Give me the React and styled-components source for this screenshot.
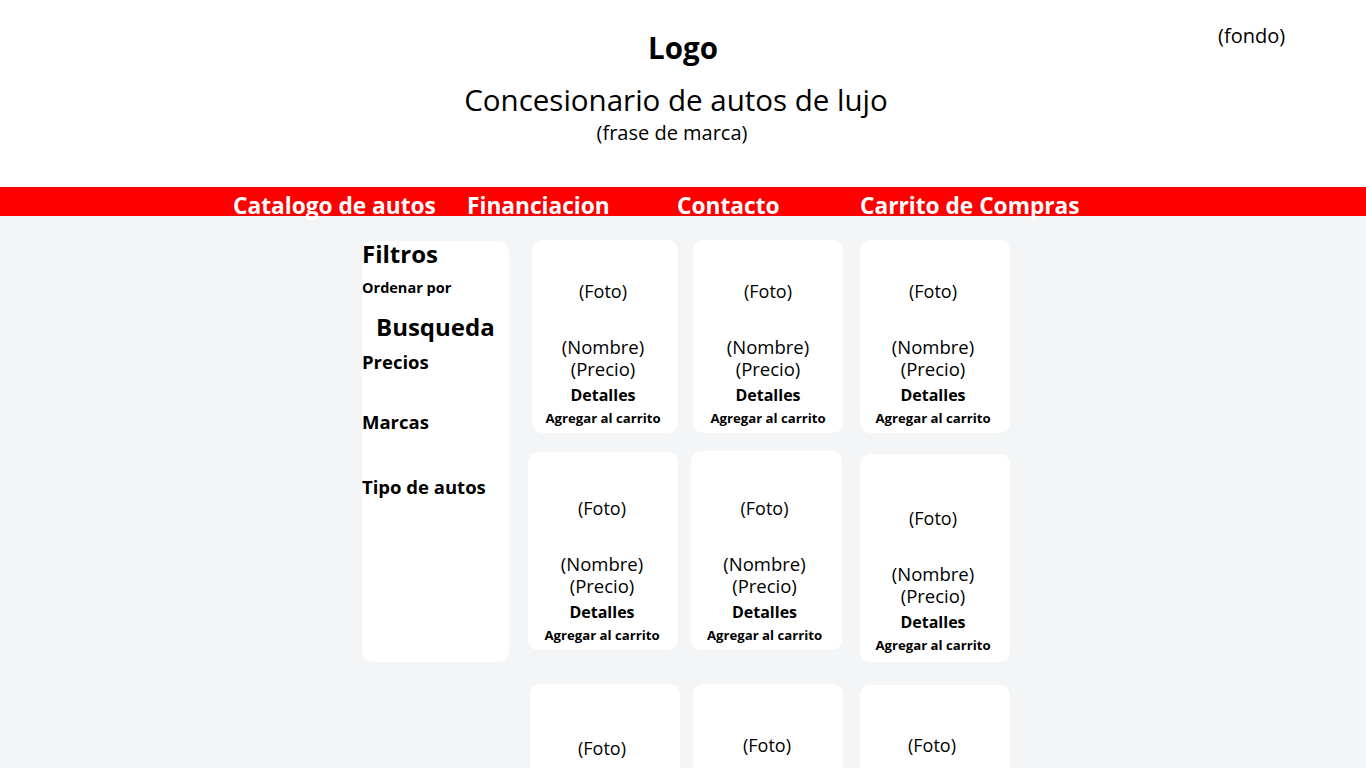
import React from "react";
import styled, { createGlobalStyle } from "styled-components";

const Global = createGlobalStyle`
  html, body { margin: 0; padding: 0; }
  body {
    font-family: "Open Sans", "Noto Sans", sans-serif;
    background: #f4f5f7;
    color: #000;
  }
`;

const Page = styled.div`
  min-height: 768px;
  background: #f4f5f7;
`;

const Header = styled.header`
  position: relative;
  height: 187px;
  background: #fff;
  display: flex;
  flex-direction: column;
  align-items: center;
  padding-top: 28px;
  box-sizing: border-box;
`;

const Logo = styled.h1`
  margin: 0;
  font-size: 29.5px;
  font-weight: 700;
  line-height: 40px;
`;

const Title = styled.h2`
  margin: 12px 14px 0 0;
  font-size: 29.5px;
  font-weight: 400;
  line-height: 40px;
`;

const Tagline = styled.p`
  margin: 0 22px 0 0;
  font-size: 20px;
  line-height: 26px;
`;

const Fondo = styled.span`
  position: absolute;
  top: 23px;
  left: 1218px;
  font-size: 20px;
  line-height: 26px;
`;

const Nav = styled.nav`
  height: 29px;
  background: #ff0000;
  display: flex;
  align-items: flex-start;
  padding-left: 233px;
`;

const NavItem = styled.a`
  display: block;
  width: ${(p) => (p.$w ? `${p.$w}px` : "auto")};
  color: #fff;
  font-size: 22.7px;
  font-weight: 700;
  line-height: 30px;
  margin-top: 4px;
  text-decoration: none;
  white-space: nowrap;
`;

const Main = styled.main`
  display: grid;
  grid-template-columns: 153px 150px 150px 150px;
  grid-template-rows: 193px 229px auto;
  column-gap: 15px;
  padding-left: 362px;
  padding-top: 24px;
`;

const Sidebar = styled.aside`
  grid-column: 1;
  grid-row: 1 / span 2;
  width: 147px;
  height: 421px;
  margin-top: 1px;
  background: #fff;
  border-radius: 10px;
  display: flex;
  flex-direction: column;
`;

const SideTitle = styled.div`
  font-size: 24px;
  font-weight: 700;
  line-height: 30px;
  padding-left: ${(p) => p.$indent || 0}px;
  margin-top: ${(p) => p.$mt || 0}px;
`;

const SideSmall = styled.div`
  font-size: 14.5px;
  font-weight: 700;
  line-height: 20px;
  margin-top: ${(p) => p.$mt || 0}px;
`;

const SideLabel = styled.div`
  font-size: 18.5px;
  font-weight: 700;
  line-height: 24px;
  margin-top: ${(p) => p.$mt || 0}px;
`;

const Card = styled.article`
  grid-column: ${(p) => p.$col};
  grid-row: ${(p) => p.$row};
  justify-self: start;
  width: ${(p) => p.$w || 150}px;
  height: ${(p) => p.$h}px;
  margin-top: ${(p) => p.$top || 0}px;
  margin-left: ${(p) => p.$dx || 0}px;
  background: #fff;
  border-radius: 10px;
  display: flex;
  flex-direction: column;
  align-items: center;
  padding-top: ${(p) => p.$pt}px;
  padding-right: ${(p) => p.$pr || 0}px;
  box-sizing: border-box;
  text-align: center;
`;

const Foto = styled.div`
  font-size: 18px;
  line-height: 24px;
  margin-bottom: 33px;
`;

const Line = styled.div`
  font-size: 18.5px;
  line-height: 22px;
`;

const Detalles = styled.div`
  font-size: 16px;
  font-weight: 700;
  line-height: 22px;
  margin-top: 4px;
`;

const Agregar = styled.div`
  font-size: 13.2px;
  font-weight: 700;
  line-height: 18px;
  margin-top: 3px;
`;

const cards = [
  { col: 2, row: 1, h: 193, top: 0, pt: 39, dx: 2, w: 146, pr: 4 },
  { col: 3, row: 1, h: 193, top: 0, pt: 39, dx: -2 },
  { col: 4, row: 1, h: 193, top: 0, pt: 39, dx: 0, pr: 4 },
  { col: 2, row: 2, h: 198, top: 19, pt: 44, dx: -2, pr: 2 },
  { col: 3, row: 2, h: 199, top: 18, pt: 45, dx: -4, w: 151, pr: 4 },
  { col: 4, row: 2, h: 208, top: 21, pt: 52, dx: 0, pr: 4 },
  { col: 2, row: 3, h: 100, top: 22, pt: 52, dx: 0, pr: 6, full: false },
  { col: 3, row: 3, h: 100, top: 22, pt: 49, dx: -2, pr: 2, full: false },
  { col: 4, row: 3, h: 100, top: 23, pt: 48, dx: 0, pr: 6, full: false },
];

function ProductCard({ c }) {
  return (
    <Card
      $col={c.col}
      $row={c.row}
      $h={c.h}
      $w={c.w}
      $top={c.top}
      $pt={c.pt}
      $pr={c.pr}
      $dx={c.dx}
    >
      <Foto>(Foto)</Foto>
      {c.full !== false && (
        <>
          <Line>(Nombre)</Line>
          <Line>(Precio)</Line>
          <Detalles>Detalles</Detalles>
          <Agregar>Agregar al carrito</Agregar>
        </>
      )}
    </Card>
  );
}

export default function App() {
  return (
    <Page>
      <Global />
      <Header>
        <Logo>Logo</Logo>
        <Title>Concesionario de autos de lujo</Title>
        <Tagline>(frase de marca)</Tagline>
        <Fondo>(fondo)</Fondo>
      </Header>
      <Nav>
        <NavItem $w={234}>Catalogo de autos</NavItem>
        <NavItem $w={210}>Financiacion</NavItem>
        <NavItem $w={183}>Contacto</NavItem>
        <NavItem>Carrito de Compras</NavItem>
      </Nav>
      <Main>
        <Sidebar>
          <SideTitle $mt={-2}>Filtros</SideTitle>
          <SideSmall $mt={9}>Ordenar por</SideSmall>
          <SideTitle $indent={14} $mt={14}>Busqueda</SideTitle>
          <SideLabel $mt={8}>Precios</SideLabel>
          <SideLabel $mt={36}>Marcas</SideLabel>
          <SideLabel $mt={41}>Tipo de autos</SideLabel>
        </Sidebar>
        {cards.map((c, i) => (
          <ProductCard key={i} c={c} />
        ))}
      </Main>
    </Page>
  );
}
